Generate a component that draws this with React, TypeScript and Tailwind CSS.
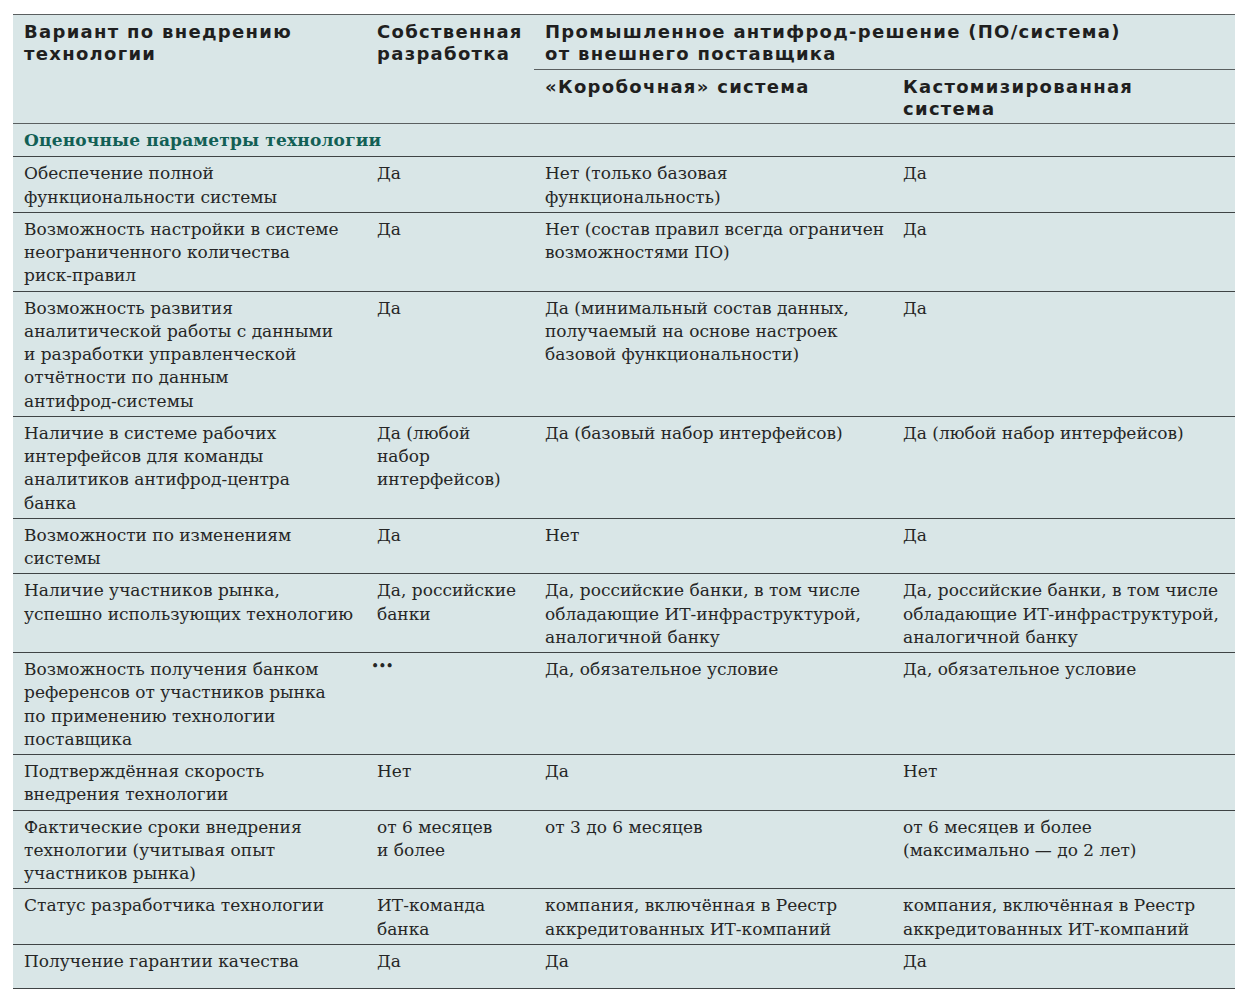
const rows: [string, string, string, string][] = [
  ["Обеспечение полной\nфункциональности системы", "Да", "Нет (только базовая\nфункциональность)", "Да"],
  ["Возможность настройки в системе\nнеограниченного количества\nриск-правил", "Да", "Нет (состав правил всегда ограничен\nвозможностями ПО)", "Да"],
  [
    "Возможность развития\nаналитической работы с данными\nи разработки управленческой\nотчётности по данным\nантифрод-системы",
    "Да",
    "Да (минимальный состав данных,\nполучаемый на основе настроек\nбазовой функциональности)",
    "Да",
  ],
  [
    "Наличие в системе рабочих\nинтерфейсов для команды\nаналитиков антифрод-центра\nбанка",
    "Да (любой\nнабор\nинтерфейсов)",
    "Да (базовый набор интерфейсов)",
    "Да (любой набор интерфейсов)",
  ],
  ["Возможности по изменениям\nсистемы", "Да", "Нет", "Да"],
  [
    "Наличие участников рынка,\nуспешно использующих технологию",
    "Да, российские\nбанки",
    "Да, российские банки, в том числе\nобладающие ИТ-инфраструктурой,\nаналогичной банку",
    "Да, российские банки, в том числе\nобладающие ИТ-инфраструктурой,\nаналогичной банку",
  ],
  [
    "Возможность получения банком\nреференсов от участников рынка\nпо применению технологии\nпоставщика",
    "•••",
    "Да, обязательное условие",
    "Да, обязательное условие",
  ],
  ["Подтверждённая скорость\nвнедрения технологии", "Нет", "Да", "Нет"],
  [
    "Фактические сроки внедрения\nтехнологии (учитывая опыт\nучастников рынка)",
    "от 6 месяцев\nи более",
    "от 3 до 6 месяцев",
    "от 6 месяцев и более\n(максимально — до 2 лет)",
  ],
  [
    "Статус разработчика технологии",
    "ИТ-команда\nбанка",
    "компания, включённая в Реестр\nаккредитованных ИТ-компаний",
    "компания, включённая в Реестр\nаккредитованных ИТ-компаний",
  ],
  ["Получение гарантии качества", "Да", "Да", "Да"],
];

// шапка: широкий гротеск, тело: сериф
const head = "font-['DejaVu_Sans',sans-serif] text-[18px] font-bold leading-[22px] tracking-[1.3px] text-[#1f1f1f] whitespace-pre align-top text-left px-[11px] pt-[6px]";
const cell = "px-[11px] pt-[5px] align-top whitespace-pre";

export default function App() {
  return (
    <div className="min-h-screen bg-white pl-[13px] pt-[14px]">
      <table className="w-[1222px] table-fixed border-collapse bg-[#d9e6e7]">
        <colgroup>
          <col className="w-[353px]" />
          <col className="w-[168px]" />
          <col className="w-[358px]" />
          <col className="w-[343px]" />
        </colgroup>
        <thead className="border-t border-[#5a5f60]">
          <tr>
            <th rowSpan={2} className={head}>{"Вариант по внедрению\nтехнологии"}</th>
            <th rowSpan={2} className={head}>{"Собственная\nразработка"}</th>
            <th colSpan={2} className={`${head} h-[55px] border-b border-[#5a5f60]`}>
              {"Промышленное антифрод-решение (ПО/система)\nот внешнего поставщика"}
            </th>
          </tr>
          <tr className="border-b border-[#5a5f60]">
            <th className={`${head} h-[54px]`}>«Коробочная» система</th>
            <th className={`${head} h-[54px]`}>{"Кастомизированная\nсистема"}</th>
          </tr>
        </thead>
        <tbody className="font-['DejaVu_Serif',serif] text-[17px] leading-[23.25px] text-[#262626]">
          <tr className="border-b border-[#3f4445]">
            <td colSpan={4} className="h-[33px] px-[11px] pt-[5px] pb-[4px] align-top font-bold tracking-[0.17px] text-[#125f55]">
              Оценочные параметры технологии
            </td>
          </tr>
          {rows.map((row, i) => (
            <tr key={i} className="border-b border-[#3f4445]">
              {row.map((text, j) =>
                text === "•••" ? (
                  <td key={j} className="px-[5px] pt-[6px] align-top text-[14px] leading-[14px] tracking-[-1px]">
                    •••
                  </td>
                ) : (
                  <td key={j} className={`${cell} ${i === rows.length - 1 ? "pb-[15px]" : "pb-[3px]"}`}>
                    {text}
                  </td>
                ),
              )}
            </tr>
          ))}
        </tbody>
      </table>
    </div>
  );
}
